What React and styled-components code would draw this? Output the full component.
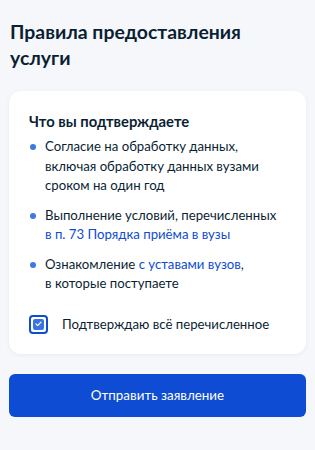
import React from 'react';
import styled, { createGlobalStyle } from 'styled-components';

const GlobalStyle = createGlobalStyle`
  html, body {
    margin: 0;
    padding: 0;
    background: #f5f7fb;
  }
  body {
    font-family: Lato, "Noto Sans", "Liberation Sans", sans-serif;
    color: #0b1f33;
  }
`;

const Page = styled.div`
  width: 315px;
  min-height: 450px;
  box-sizing: border-box;
  padding: 19px 9px 0 9px;
  display: flex;
  flex-direction: column;
`;

const Title = styled.h1`
  margin: 0 0 0 1px;
  font-size: 19.4px;
  line-height: 26px;
  font-weight: 700;
  color: #0b1f33;
`;

const Card = styled.div`
  margin-top: 20px;
  background: #ffffff;
  border-radius: 12px;
  padding: 20px 20px 20px 20px;
  box-shadow: 0 1px 4px rgba(11, 31, 51, 0.06);
`;

const CardTitle = styled.h2`
  margin: 0 0 6px 0;
  font-size: 14.8px;
  line-height: 20px;
  font-weight: 700;
  color: #0b1f33;
`;

const List = styled.ul`
  list-style: none;
  margin: 0;
  padding: 0;
  display: flex;
  flex-direction: column;
  gap: 10px;
`;

const Item = styled.li`
  position: relative;
  padding-left: 16px;
  font-size: 13.2px;
  line-height: 19.5px;
  color: #0b1f33;

  &::before {
    content: '';
    position: absolute;
    left: 1px;
    top: 7px;
    width: 6px;
    height: 6px;
    border-radius: 50%;
    background: #3d78e3;
  }
`;

const Link = styled.a`
  color: #0d4cd3;
  text-decoration: none;
`;

const CheckRow = styled.label`
  margin-top: 21px;
  display: flex;
  align-items: center;
  gap: 14px;
  font-size: 13.2px;
  color: #0b1f33;
`;

const Box = styled.span`
  width: 19px;
  height: 19px;
  box-sizing: border-box;
  border: 2px solid #0d4cd3;
  border-radius: 4px;
  padding: 2px;
  display: flex;
  background: #fff;
`;

const BoxFill = styled.span`
  flex: 1;
  border-radius: 2px;
  background: #3a74e0;
  display: flex;
  align-items: center;
  justify-content: center;
`;

const Button = styled.button`
  margin-top: 20px;
  height: 43px;
  border: none;
  border-radius: 6px;
  background: #0d4cd3;
  color: #ffffff;
  font-family: Lato, "Noto Sans", "Liberation Sans", sans-serif;
  font-size: 13.4px;
  cursor: pointer;
`;

export default function App() {
  return (
    <>
      <GlobalStyle />
      <Page>
        <Title>Правила предоставления услуги</Title>
        <Card>
          <CardTitle>Что вы подтверждаете</CardTitle>
          <List>
            <Item>
              Согласие на обработку данных,<br />включая обработку данных вузами<br />сроком на один год
            </Item>
            <Item>
              Выполнение условий, перечисленных<br />
              <Link href="#">в п. 73 Порядка приёма в вузы</Link>
            </Item>
            <Item>
              Ознакомление <Link href="#">с уставами вузов</Link>,<br />в которые поступаете
            </Item>
          </List>
          <CheckRow>
            <Box>
              <BoxFill>
                <svg width="7" height="6" viewBox="0 0 7 6" fill="none">
                  <path d="M1 3l1.7 1.7L6 1.2" stroke="#fff" strokeWidth="1.2" strokeLinecap="round" strokeLinejoin="round" />
                </svg>
              </BoxFill>
            </Box>
            Подтверждаю всё перечисленное
          </CheckRow>
        </Card>
        <Button>Отправить заявление</Button>
      </Page>
    </>
  );
}
